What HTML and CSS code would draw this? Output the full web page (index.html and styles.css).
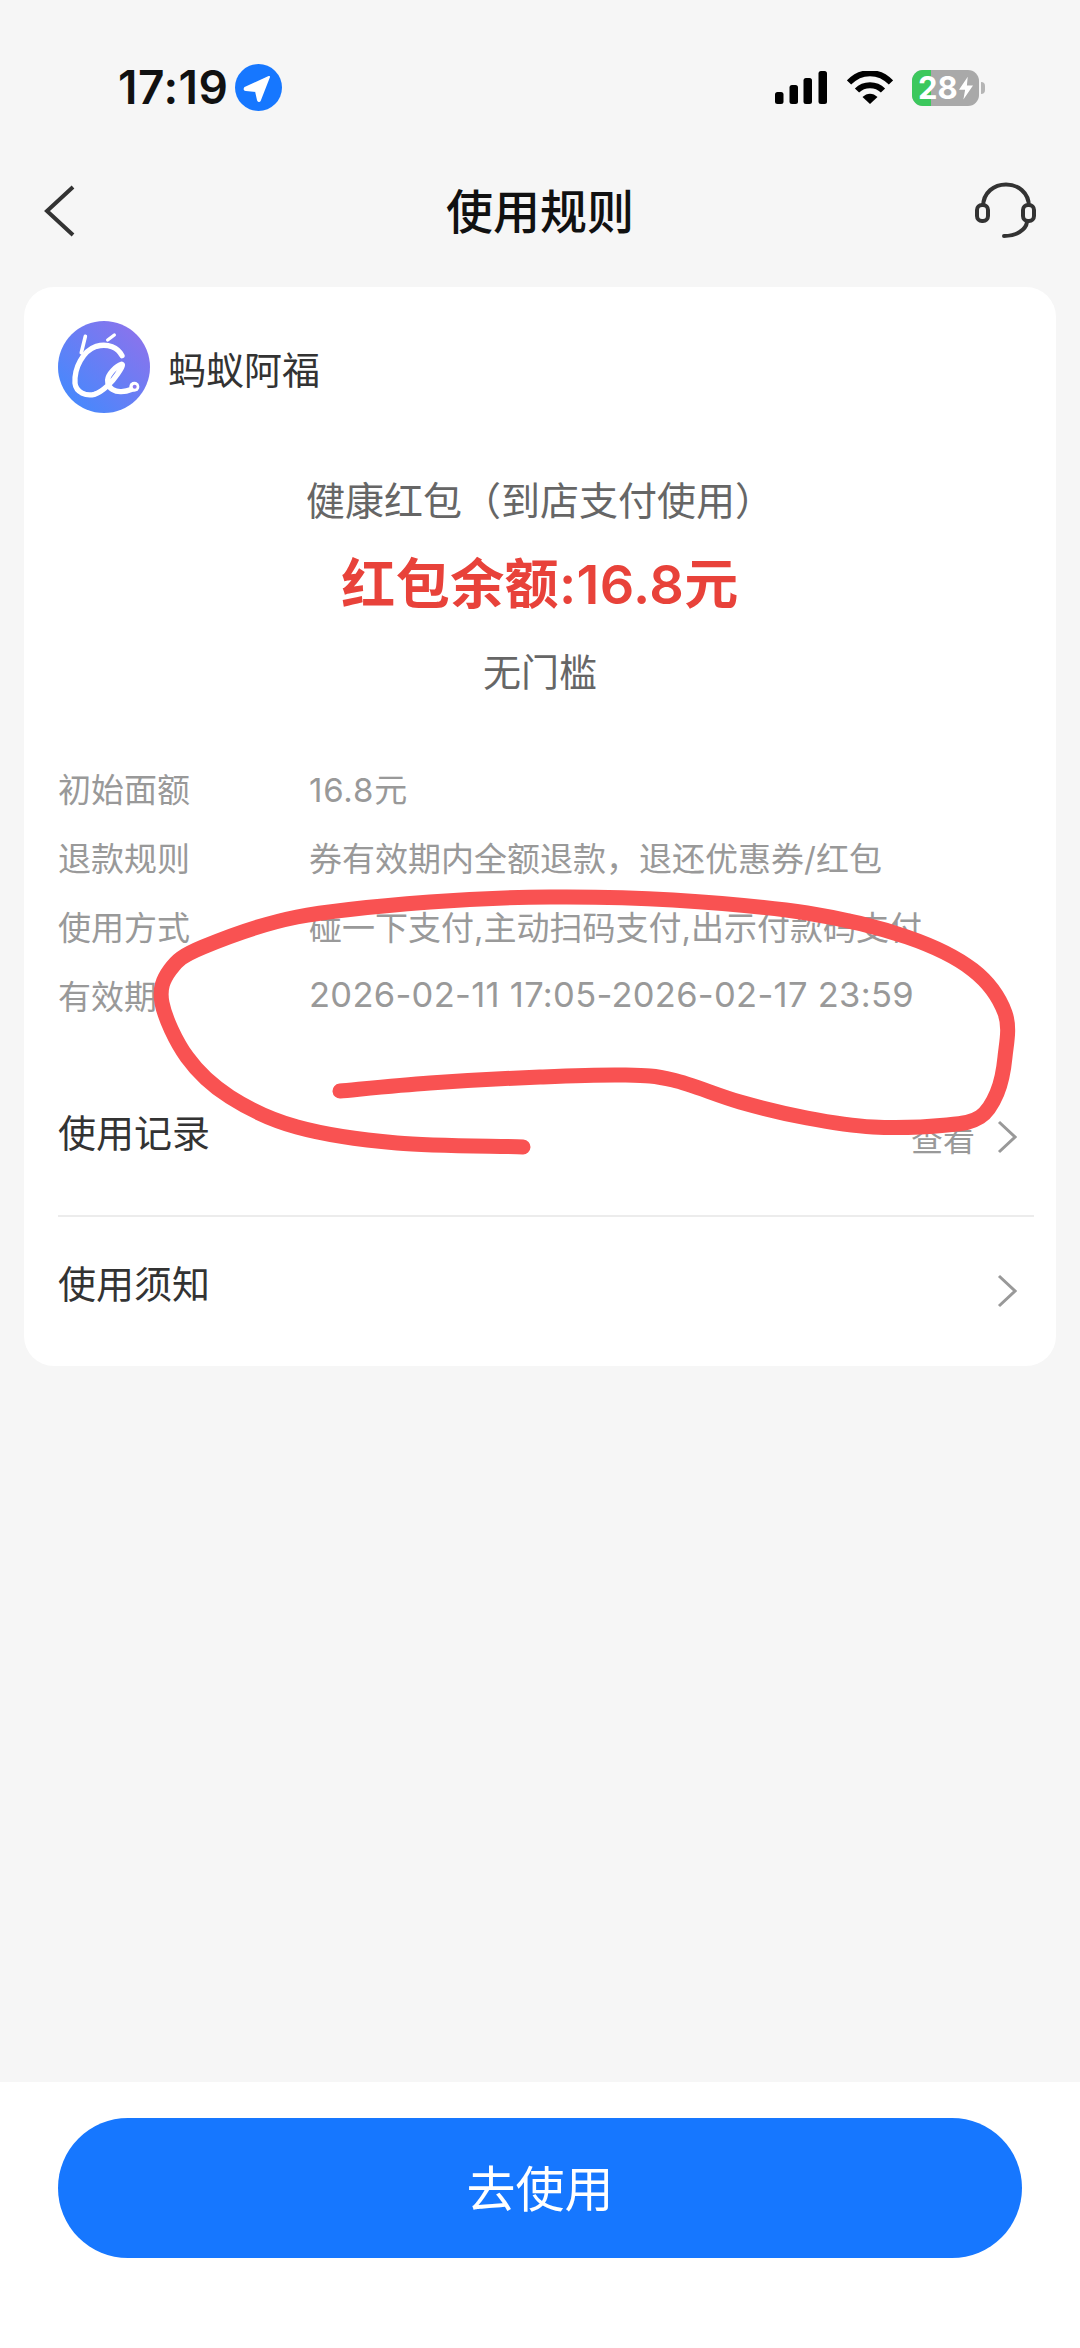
FILE: index.html
```html
<!DOCTYPE html>
<html lang="zh-CN">
<head>
<meta charset="utf-8">
<title>使用规则</title>
<link rel="stylesheet" href="styles.css">
</head>
<body>
<div class="page">
  <header class="status">
    <div class="status-left">
      <span class="time">17:19</span>
      <svg class="loc" viewBox="0 0 47 47"><circle cx="23.5" cy="23.5" r="23.5" fill="#1677ff"/><path d="M34 13 L10 24 Q9 26 11 26 L21 27 L23 36 Q24 38 25 36 Z" fill="#fff" stroke="#fff" stroke-width="2" stroke-linejoin="round"/></svg>
    </div>
    <div class="status-right">
      <svg class="signal" viewBox="0 0 53 33"><rect x="0" y="21" width="8.5" height="12" rx="2.5"/><rect x="14.500" y="14" width="8.500" height="19" rx="2.500"/><rect x="28.500" y="7" width="8.500" height="26" rx="2.500"/><rect x="43.500" y="0" width="8.500" height="33" rx="2.500"/></svg>
      <svg class="wifi" viewBox="0 0 46 33"><path d="M2 11.500 C14 -1 32 -1 44 11.500" fill="none" stroke="#000" stroke-width="6"/><path d="M10 19.500 C17 12.500 29 12.500 36 19.500" fill="none" stroke="#000" stroke-width="6"/><path d="M15.500 26 C20 21.500 26 21.500 30.500 26 L23 33 Z"/></svg>
      <div class="battery"><div class="battery-fill"></div><span class="battery-text">28</span><svg class="bolt" viewBox="0 0 16 26"><path d="M10 0 L0 15 H7 L5 26 L16 10 H9 Z" fill="#fff"/></svg></div>
      <div class="battery-nub"></div>
    </div>
  </header>
  <nav class="nav">
    <svg class="back" viewBox="0 0 32 54"><path d="M29 3 L3 27 L29 51" fill="none" stroke="#333" stroke-width="4"/></svg>
    <h1 class="nav-title">使用规则</h1>
    <svg class="headset" viewBox="0 0 62 60"><path d="M9 26 C9 -4 55 -4 55 26" fill="none" stroke="#333" stroke-width="4"/><rect x="3" y="24" width="11" height="16" rx="5" fill="none" stroke="#333" stroke-width="4"/><rect x="49" y="24" width="11" height="16" rx="5" fill="none" stroke="#333" stroke-width="4"/><path d="M53 41 C52 49 42 55 30 55" fill="none" stroke="#333" stroke-width="4" stroke-linecap="round"/></svg>
  </nav>
  <main class="content">
    <section class="card">
      <div class="brand">
        <svg class="logo" viewBox="0 0 276 276">
          <defs><linearGradient id="lg" x1="0" y1="1" x2="1" y2="0"><stop offset="0" stop-color="#3c8cff"/><stop offset="1" stop-color="#9470ea"/></linearGradient></defs>
          <circle cx="138" cy="138" r="138" fill="url(#lg)"/>
          <g fill="none" stroke="#fff" stroke-width="16" stroke-linecap="round" stroke-linejoin="round">
            <path d="M192 104 C180 80 150 66 115 76 C75 90 48 140 51 187 C54 215 85 226 109 220 C135 212 165 180 178 160 C190 142 198 128 190 130 C175 134 150 160 149 177 C148 205 175 213 190 212 C202 212 212 209 222 205"/>
            <path d="M82 46 L70 95" stroke-width="11"/>
            <path d="M169 42 L149 57" stroke-width="10"/>
          </g>
          <circle cx="229" cy="197" r="15" fill="#fff"/><circle cx="230" cy="197" r="6" fill="#8a78ee"/>
        </svg>
        <span class="brand-name">蚂蚁阿福</span>
      </div>
      <div class="summary">
        <p class="summary-title">健康红包（到店支付使用）</p>
        <p class="summary-amount">红包余额:16.8元</p>
        <p class="summary-note">无门槛</p>
      </div>
      <dl class="rules">
        <div class="rule"><dt>初始面额</dt><dd class="rule-amount">16.8元</dd></div>
        <div class="rule"><dt>退款规则</dt><dd>券有效期内全额退款，退还优惠券/红包</dd></div>
        <div class="rule"><dt>使用方式</dt><dd>碰一下支付,主动扫码支付,出示付款码支付</dd></div>
        <div class="rule"><dt>有效期</dt><dd class="rule-date">2026-02-11 17:05-2026-02-17 23:59</dd></div>
      </dl>
      <div class="link link-first">
        <span class="link-label">使用记录</span>
        <span class="link-side"><span class="link-hint">查看</span><svg class="chev" viewBox="0 0 20 34"><path d="M2 2 L18 17 L2 32" fill="none" stroke="#999" stroke-width="3"/></svg></span>
      </div>
      <div class="link link-last">
        <span class="link-label">使用须知</span>
        <span class="link-side"><svg class="chev" viewBox="0 0 20 34"><path d="M2 2 L18 17 L2 32" fill="none" stroke="#999" stroke-width="3"/></svg></span>
      </div>
    </section>
  </main>
  <footer class="footer">
    <button class="cta">去使用</button>
  </footer>
  <svg class="scribble" viewBox="0 0 1080 2348"><path d="M523 1147 C502 1146 434.700 1146.300 397 1143 C359.300 1139.700 324.800 1134.700 297 1127 C269.200 1119.300 248.300 1108.700 230 1097 C211.700 1085.300 198.300 1072.700 187 1057 C175.700 1041.300 164.800 1017.500 162 1003 C159.200 988.500 163.200 979.300 170 970 C176.800 960.700 181.800 955.800 203 947 C224.200 938.200 259.200 924.500 297 917 C334.800 909.500 387.800 905.300 430 902 C472.200 898.700 509.500 897.300 550 897 C590.500 896.700 630.200 897.300 673 900 C715.800 902.700 768 906.800 807 913 C846 919.200 879.300 927.500 907 937 C934.700 946.500 956.700 957.300 973 970 C989.300 982.700 999.700 998.500 1005 1013 C1010.300 1027.500 1006.300 1043.700 1005 1057 C1003.700 1070.300 1001.200 1083 997 1093 C992.800 1103 988.300 1111.700 980 1117 C971.700 1122.300 964.800 1123.300 947 1125 C929.200 1126.700 896.300 1128.200 873 1127 C849.700 1125.800 829.200 1122.200 807 1118 C784.800 1113.800 762.300 1108.300 740 1102 C717.700 1095.700 692.500 1084.500 673 1080 C653.500 1075.500 645.200 1075.500 623 1075 C600.800 1074.500 572.200 1075.700 540 1077 C507.800 1078.300 463.300 1080.700 430 1083 C396.700 1085.300 355 1089.700 340 1091"/></svg>
</div>
</body>
</html>
```

FILE: styles.css
```css
* { box-sizing: border-box; }
html, body { margin: 0; padding: 0; }
body {
  font-family: Inter, "Noto Sans CJK SC", sans-serif;
  background: #f6f6f6;
  color: #333;
}
.page {
  position: relative;
  width: 1080px;
  height: 2348px;
  display: flex;
  flex-direction: column;
  overflow: hidden;
}
.status {
  height: 150px;
  flex: none;
  display: flex;
  justify-content: space-between;
  align-items: flex-start;
  padding: 64px 95px 0 118px;
}
.status-left { display: flex; align-items: center; gap: 7px; }
.time { font-size: 46px; font-weight: 600; line-height: 47px; color: #111; letter-spacing: 0.5px; }
.loc { width: 47px; height: 47px; }
.status-right { display: flex; align-items: center; height: 47px; }
.signal { width: 53px; height: 33px; margin-right: 19px; }
.wifi { width: 46px; height: 33px; margin-right: 19px; }
.battery {
  position: relative;
  width: 67px;
  height: 36px;
  border-radius: 11px;
  background: #a9a9a9;
  overflow: hidden;
  display: flex;
  align-items: center;
  padding-left: 6px;
}
.battery-fill { position: absolute; left: 0; top: 0; bottom: 0; width: 19px; background: #3cc85d; }
.battery-text { position: relative; color: #fff; font-size: 31px; font-weight: 700; line-height: 36px; font-family: Inter, sans-serif; }
.bolt { position: relative; width: 14px; height: 24px; margin-left: 1px; }
.battery-nub { width: 4px; height: 12px; margin-left: 2px; border-radius: 0 4px 4px 0; background: #b5b5b5; }
.nav {
  height: 122px;
  flex: none;
  display: grid;
  grid-template-columns: 1fr auto 1fr;
  align-items: center;
  padding: 0 44px;
}
.back { width: 32px; height: 54px; }
.nav-title { margin: 0; font-size: 47px; font-weight: 500; color: #111; line-height: 1; }
.headset { width: 62px; height: 60px; justify-self: end; }
.content { flex: 1; padding: 15px 24px 0; }
.card {
  height: 1079px;
  background: #fff;
  border-radius: 30px;
  padding: 34px 34px 0;
}
.brand { display: flex; align-items: center; gap: 18px; height: 92px; }
.logo { width: 92px; height: 92px; flex: none; }
.brand-name { font-size: 38px; color: #333; font-weight: 400; }
.summary { text-align: center; margin-top: 55px; }
.summary p { margin: 0; }
.summary-title { font-size: 39px; line-height: 66px; color: #666; }
.summary-amount { font-size: 54px; line-height: 102px; font-weight: 600; letter-spacing: 0.4px; color: #e8423a; }
.summary-note { font-size: 38px; line-height: 72px; color: #666; }
.rules { margin: 45px 0 0; }
.rule { display: flex; height: 69px; align-items: center; font-size: 33px; color: #999; }
.rule dt { width: 251px; flex: none; }
.rule dd { margin: 0; white-space: nowrap; }
.rule .rule-amount { letter-spacing: 0.8px; }
.rule .rule-date { font-size: 34.5px; letter-spacing: 0.3px; }
.link { display: flex; justify-content: space-between; align-items: flex-start; margin-right: -12px; }
.link-first { height: 188px; padding-top: 76px; border-bottom: 2px solid #ececec; }
.link-last { padding-top: 39px; }
.link-label { font-size: 38px; line-height: 56px; color: #333; }
.link-side { display: flex; align-items: center; gap: 22px; height: 56px; margin-top: 7px; padding-right: 17px; }
.link-first .link-side { margin-top: 4px; }
.link-hint { font-size: 32px; color: #999; }
.chev { width: 20px; height: 34px; }
.footer {
  height: 266px;
  flex: none;
  background: #fff;
  padding: 36px 58px 0;
}
.cta {
  display: block;
  width: 964px;
  height: 140px;
  border: 0;
  border-radius: 70px;
  padding: 0 0 5px;
  background: #1677ff;
  color: #fff;
  font-family: Inter, "Noto Sans CJK SC", sans-serif;
  font-size: 49px;
}
.scribble {
  position: absolute;
  left: 0;
  top: 0;
  width: 1080px;
  height: 2348px;
  pointer-events: none;
  fill: none;
  stroke: #f95252;
  stroke-width: 15;
  stroke-linecap: round;
  stroke-linejoin: round;
}
```
